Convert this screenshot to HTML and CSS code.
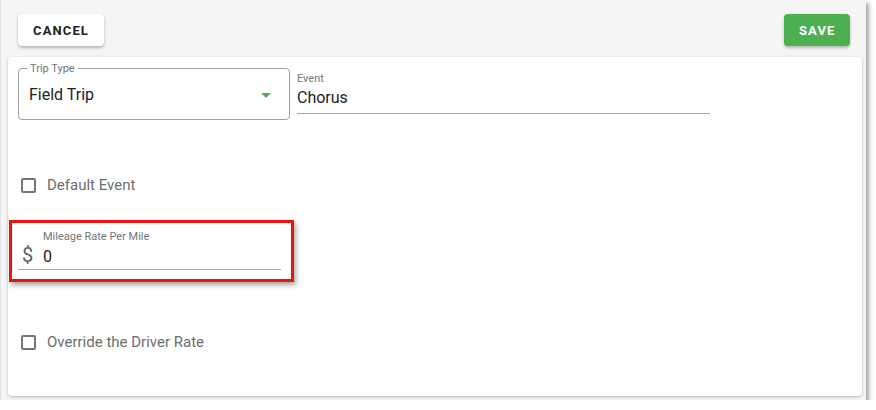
FILE: index.html
```html
<!DOCTYPE html>
<html lang="en">
<head>
    <meta charset="UTF-8">
    <meta name="viewport" content="width=device-width, initial-scale=1.0">
    <title>Trip Event</title>
    <link rel="stylesheet" href="styles.css">
</head>
<body>
    <div class="shot">
        <div class="toolbar">
            <button class="btn btn-cancel">CANCEL</button>
            <button class="btn btn-save">SAVE</button>
        </div>

        <div class="card">
            <div class="row">
                <div class="select">
                    <span class="select-label">Trip Type</span>
                    <span class="select-value">Field Trip</span>
                    <span class="caret"></span>
                </div>
                <div class="field field-event">
                    <span class="field-label">Event</span>
                    <span class="field-value">Chorus</span>
                </div>
            </div>

            <label class="check check-first">
                <span class="box"></span>
                Default Event
            </label>

            <div class="highlight">
                <div class="field field-rate">
                    <span class="field-label rate-label">Mileage Rate Per Mile</span>
                    <div class="rate-input">
                        <span class="prefix">$</span>
                        <span class="field-value">0</span>
                    </div>
                </div>
            </div>

            <label class="check check-second">
                <span class="box"></span>
                Override the Driver Rate
            </label>
        </div>
    </div>
</body>
</html>
```

FILE: styles.css
```css
body {
    margin: 0;
    background: #ffffff;
    font-family: Roboto, 'Liberation Sans', sans-serif;
}
.shot {
    width: 866px;
    height: 400px;
    background: #f5f5f5;
    border-left: 1px solid #e2e2e2;
    box-sizing: border-box;
    box-shadow: 3px 3px 4px rgba(0, 0, 0, 0.35);
    overflow: hidden;
}
.toolbar {
    display: flex;
    justify-content: space-between;
    padding: 14px 16px 0 17px;
}
.btn {
    height: 32px;
    border: none;
    border-radius: 4px;
    font-family: inherit;
    font-size: 13px;
    font-weight: 700;
    letter-spacing: 1.1px;
    padding: 0 15px;
    cursor: pointer;
}
.btn-cancel {
    background: #ffffff;
    color: #212121;
    width: 86px;
    box-shadow: 0 2px 3px rgba(0, 0, 0, 0.25), 0 0 1px rgba(0, 0, 0, 0.15);
}
.btn-save {
    background: #4caf50;
    color: #ffffff;
    width: 66px;
    box-shadow: 0 2px 3px rgba(0, 0, 0, 0.25);
}
.card {
    margin: 11px 0 0 7px;
    width: 854px;
    height: 339px;
    background: #ffffff;
    border-radius: 4px;
    box-shadow: 0 1px 3px rgba(0, 0, 0, 0.25);
    padding: 11px 0 0 10px;
    box-sizing: border-box;
}
.row {
    display: flex;
    gap: 7px;
}
.select {
    position: relative;
    width: 272px;
    height: 52px;
    border: 1px solid #9e9e9e;
    border-radius: 4px;
    box-sizing: border-box;
    display: flex;
    align-items: center;
    padding: 0 10px;
}
.select-label {
    position: absolute;
    top: -7px;
    left: 8px;
    background: #ffffff;
    padding: 0 3px;
    font-size: 11px;
    color: #757575;
}
.select-value {
    font-size: 16px;
    color: #212121;
    margin-top: 1px;
}
.caret {
    position: absolute;
    right: 18px;
    top: 24px;
    border-left: 5px solid transparent;
    border-right: 5px solid transparent;
    border-top: 5px solid #4caf50;
}
.field {
    display: flex;
    flex-direction: column;
    border-bottom: 1px solid #a8a8a8;
    box-sizing: border-box;
}
.field-event {
    width: 413px;
    height: 46px;
    padding-top: 4px;
}
.field-label {
    font-size: 11px;
    color: #757575;
}
.field-value {
    font-size: 16px;
    color: #212121;
    margin-top: 3px;
}
.check {
    display: flex;
    align-items: center;
    gap: 11px;
    font-size: 15px;
    color: #6e6e6e;
    margin-left: 3px;
}
.check-first {
    margin-top: 56px;
}
.check-second {
    margin-top: 51px;
}
.box {
    width: 15px;
    height: 15px;
    border: 2px solid #757575;
    border-radius: 2px;
    box-sizing: border-box;
}
.highlight {
    margin: 26px 0 0 -9px;
    width: 285px;
    height: 62px;
    border: 3px solid #ee1111;
    box-sizing: border-box;
    padding: 4px 10px 0 6px;
    box-shadow: 2px 3px 5px rgba(0, 0, 0, 0.35);
}
.field-rate {
    height: 43px;
    padding-top: 3px;
}
.rate-label {
    margin-left: 25px;
}
.rate-input {
    display: flex;
    align-items: baseline;
}
.prefix {
    font-size: 20px;
    color: #616161;
    width: 25px;
    padding-left: 4px;
    box-sizing: border-box;
}
```
